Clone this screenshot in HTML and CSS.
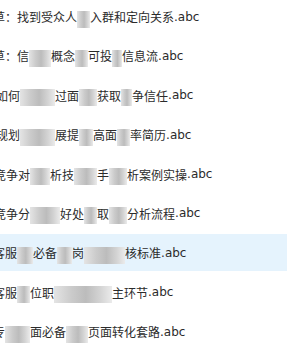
FILE: index.html
```html
<!doctype html>
<html lang="zh-CN">
<head>
  <meta charset="UTF-8">
  <meta name="viewport" content="width=device-width, initial-scale=1.0">
  <title>文件列表</title>
  <link rel="stylesheet" href="styles.css">
</head>
<body>
  <ul class="files">
    <li class="file s7">草：找到受众人<i class="mz m13"></i>入群和定向关系<span class="ext">.abc</span></li>
    <li class="file s7">草：信<i class="mz m22"></i>概念<i class="mz m13"></i>可投<i class="mz m10"></i>信息流<span class="ext">.abc</span></li>
    <li class="file s4">如何<i class="mz m35"></i>过面<i class="mz m18"></i>获取<i class="mz m11"></i>争信任<span class="ext">.abc</span></li>
    <li class="file s4">规划<i class="mz m35"></i>展提<i class="mz m14"></i>高面<i class="mz m13"></i>率简历<span class="ext">.abc</span></li>
    <li class="file s6">竞争对<i class="mz m20"></i>析技<i class="mz m23"></i>手<i class="mz m18"></i>析案例实操<span class="ext">.abc</span></li>
    <li class="file s6">竞争分<i class="mz m30"></i>好处<i class="mz m13"></i>取<i class="mz m18"></i>分析流程<span class="ext">.abc</span></li>
    <li class="file s7 hover">客服<i class="mz m16"></i>必备<i class="mz m15"></i>岗<i class="mz m41"></i>核标准<span class="ext">.abc</span></li>
    <li class="file s7">客服<i class="mz m13"></i>位职<i class="mz m58"></i>主环节<span class="ext">.abc</span></li>
    <li class="file s7">专<i class="mz m25"></i>面必备<i class="mz m22"></i>页面转化套路<span class="ext">.abc</span></li>
  </ul>
</body>
</html>
```

FILE: styles.css
```css
*{
  box-sizing: border-box;
}

body{
  margin: 0;
  overflow: hidden;
  color: #2b2b2b;
  font-family: "Noto Sans CJK SC", sans-serif;
  font-size: 12px;
  background-color: #fff;
}

.files{
  display: flex;
  flex-direction: column;
  gap: 2.4px;
  margin: -2px 0 0;
  padding: 0;
  list-style: none;
}

.file{
  display: flex;
  align-items: center;
  height: 37px;
  white-space: nowrap;
}

.file.hover{
  background-color: #e5f3fd;
}

.ext{
  font-family: "DejaVu Sans", sans-serif;
}

/* first glyph is cut by the window edge */
.s7{ margin-left: -7px; }
.s6{ margin-left: -6px; }
.s4{ margin-left: -4px; }

/* mosaic over hidden words */
.mz{
  display: inline-block;
  height: 17px;
  margin-top: 5px;
  background: linear-gradient(90deg, #e4e4e4 0, #cbcbcb 30%, #bcbcbc 55%, #d4d4d4 80%, #ebebeb 100%);
}

.m10{ width: 10px; }
.m11{ width: 11px; }
.m13{ width: 13px; }
.m14{ width: 14px; }
.m15{ width: 15px; }
.m16{ width: 16px; }
.m18{ width: 18px; }
.m20{ width: 20px; }
.m22{ width: 22px; }
.m23{ width: 23px; }
.m25{ width: 25px; }
.m30{ width: 30px; }
.m35{ width: 35px; }
.m41{ width: 41px; }
.m58{ width: 58px; }
```
